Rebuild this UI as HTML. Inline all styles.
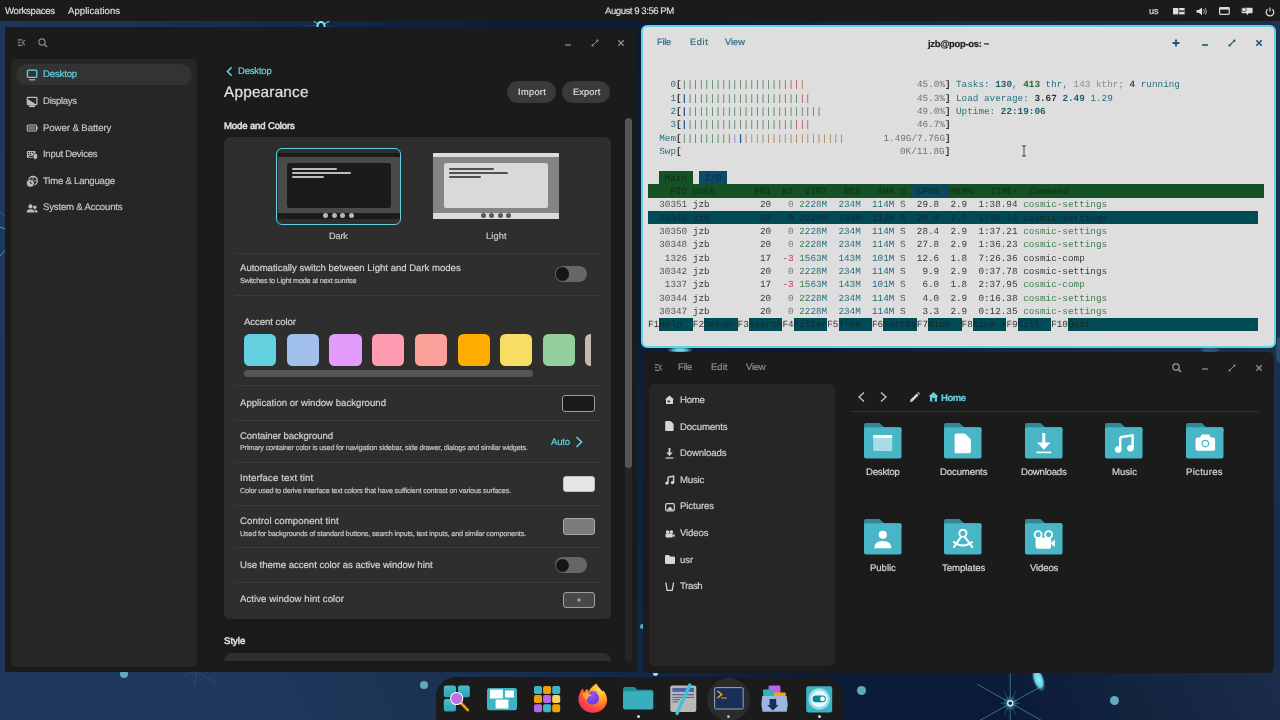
<!DOCTYPE html>
<html><head><meta charset="utf-8"><title>COSMIC desktop</title>
<style>
html,body{margin:0;padding:0;width:1280px;height:720px;overflow:hidden;background:#1b2d4c;}
body{position:relative;font-family:"Liberation Sans",sans-serif;}
svg{overflow:visible}
.t{position:absolute;white-space:pre;line-height:1;text-rendering:geometricPrecision;will-change:transform;transform-origin:0 0}
.s{font-family:"Liberation Sans",sans-serif;-webkit-text-stroke:0.2px currentColor}
.m{font-family:"Liberation Mono",monospace}
</style></head><body>
<div style="position:absolute;left:0;top:0;width:1280px;height:720px;background:linear-gradient(65deg,#20355a 0%,#1f385c 15%,#1b3152 30%,#11284a 40%,#0b1c39 52%,#0b1a36 62%,#142540 72%,#1b2b4a 80%,#1d2e4e 90%,#1f3151 100%);"></div>
<div style="position:absolute;left:119.9px;top:669.6999999999999px;width:8.2px;height:8.2px;background:#62a9c0;border-radius:4.1px;"></div>
<div style="position:absolute;left:420.0px;top:680.8px;width:8.4px;height:8.4px;background:#62a9c0;border-radius:4.2px;"></div>
<div style="position:absolute;left:856.75px;top:686.1px;width:9.0px;height:9.0px;background:#62a9c0;border-radius:4.5px;"></div>
<div style="position:absolute;left:1110.1px;top:696.3px;width:9.0px;height:9.0px;background:#62a9c0;border-radius:4.5px;"></div>
<div style="position:absolute;left:653.1999999999999px;top:670.6999999999999px;width:5.2px;height:5.2px;background:#86e6f8;border-radius:2.6px;"></div>
<div style="position:absolute;left:639.7px;top:623.6px;width:5.0px;height:5.0px;background:#5aa8c0;border-radius:2.5px;"></div>
<svg style="position:absolute;left:960px;top:660px;" width="100" height="60" viewBox="0 0 100 60">
<defs><radialGradient id="sg" cx="0.5" cy="0.5" r="0.5"><stop offset="0" stop-color="#9ff4ff" stop-opacity="0.9"/><stop offset="0.4" stop-color="#5fc8e8" stop-opacity="0.45"/><stop offset="1" stop-color="#3a90c0" stop-opacity="0"/></radialGradient>
<radialGradient id="cg" cx="0.5" cy="0.5" r="0.5"><stop offset="0" stop-color="#8af2ff" stop-opacity="1"/><stop offset="0.6" stop-color="#70e0f5" stop-opacity="0.9"/><stop offset="1" stop-color="#2a7aa0" stop-opacity="0"/></radialGradient></defs>
<g stroke="#4aa6c8" stroke-width="0.9" opacity="0.7">
<line x1="50.2" y1="10" x2="50.2" y2="62"/><line x1="17" y1="24" x2="86" y2="63"/><line x1="17" y1="62" x2="82" y2="26"/>
</g>
<g stroke="#4aa6c8" stroke-width="0.8" opacity="0.45">
<line x1="40" y1="43.2" x2="60" y2="43.2"/><line x1="44" y1="31" x2="56" y2="55"/><line x1="56" y1="31" x2="44" y2="55"/>
</g>
<circle cx="50.2" cy="43.2" r="8" fill="url(#sg)"/>
<circle cx="50.2" cy="43.2" r="2.5" fill="#1b1b1b" stroke="#b8f6ff" stroke-width="1.4"/>
<ellipse cx="78.5" cy="19.5" rx="6" ry="13" transform="rotate(-18 78.5 19.5)" fill="url(#cg)"/>
</svg>
<svg style="position:absolute;left:170px;top:668px;" width="60" height="24" viewBox="0 0 60 24"><g stroke="#4a9cc0" stroke-width="0.8" fill="none" opacity="0.6"><path d="M26.5 4 L24.4 17" opacity="0.55"/><path d="M28 4 L46 15" opacity="0.45"/><path d="M25 4 L11 7" opacity="0.35"/><path d="M26 4 L20 12" opacity="0.3"/><path d="M27.5 4 L31 12" opacity="0.3"/></g></svg>
<svg style="position:absolute;left:0px;top:205px;" width="6" height="55" viewBox="0 0 6 55"><g stroke="#4aa6c6" fill="none"><path d="M0 7 L5 11.5" stroke-width="0.8" opacity="0.5"/><path d="M0 22 L5 24" stroke-width="1" opacity="0.85"/><path d="M0 51 L5 45" stroke-width="1" opacity="0.8"/></g></svg>
<svg style="position:absolute;left:660px;top:346px;" width="40" height="8" viewBox="0 0 40 8"><defs><radialGradient id="g1" cx="0.5" cy="0.5" r="0.5"><stop offset="0" stop-color="#8af0ff"/><stop offset="0.5" stop-color="#60d0ea" stop-opacity="0.8"/><stop offset="1" stop-color="#2a80b0" stop-opacity="0"/></radialGradient></defs><ellipse cx="20" cy="4" rx="14" ry="3.5" fill="url(#g1)"/></svg>
<svg style="position:absolute;left:1190px;top:346px;" width="40" height="8" viewBox="0 0 40 8"><ellipse cx="20" cy="4" rx="9" ry="2" fill="#4ab8d0" opacity="0.3"/></svg>
<svg style="position:absolute;left:1274px;top:335px;" width="6" height="30" viewBox="0 0 6 30"><ellipse cx="5" cy="15" rx="3" ry="13" fill="#3a90a8" opacity="0.35"/></svg>
<svg style="position:absolute;left:296px;top:18px;" width="50" height="12" viewBox="0 0 50 12"><g stroke="#6ad8ee" stroke-width="1.3" opacity="0.75"><path d="M25 7.5 L17.5 3.2"/><path d="M25 7.5 L33.5 3.2"/></g><path d="M2 6.8 L25 7.5 L40 8.2 L25 8.6 Z" fill="#4fb8d8" opacity="0.35"/><circle cx="25" cy="7.6" r="3.6" fill="none" stroke="#80eefc" stroke-width="1.8"/><circle cx="25" cy="8" r="2.2" fill="#1b1b1b"/></svg>
<div style="position:absolute;left:0px;top:0px;width:1280px;height:21px;background:#1b1b1b;border-radius:0px;"></div>
<div class="t s" style="left:5.00px;top:7px;font-size:9.6px;color:#dcdcdc;letter-spacing:-0.286px;">Workspaces</div>
<div class="t s" style="left:68.10px;top:7px;font-size:9.6px;color:#dcdcdc;letter-spacing:0.035px;">Applications</div>
<div class="t s" style="left:605.20px;top:7px;font-size:9.6px;color:#dcdcdc;letter-spacing:-0.467px;">August 9 3:56 PM</div>
<div class="t s" style="left:1149.30px;top:7px;font-size:9.12px;color:#dcdcdc;letter-spacing:-0.112px;">us</div>
<div style="position:absolute;left:5px;top:27px;width:632px;height:644.5px;background:#1b1b1b;border-radius:0px;"></div>
<div style="position:absolute;left:11px;top:59px;width:186px;height:608px;background:#262626;border-radius:6px;"></div>
<div style="position:absolute;left:16px;top:64px;width:176px;height:21.3px;background:#333333;border-radius:11px;"></div>
<div class="t s" style="left:43.00px;top:70px;font-size:9.6px;color:#63d0df;letter-spacing:-0.172px;">Desktop</div>
<div class="t s" style="left:43.00px;top:97px;font-size:9.6px;color:#c4c4c4;letter-spacing:-0.300px;">Displays</div>
<div class="t s" style="left:43.00px;top:124px;font-size:9.6px;color:#c4c4c4;letter-spacing:-0.069px;">Power &amp; Battery</div>
<div class="t s" style="left:43.00px;top:150px;font-size:9.6px;color:#c4c4c4;letter-spacing:-0.300px;">Input Devices</div>
<div class="t s" style="left:43.00px;top:177px;font-size:9.6px;color:#c4c4c4;letter-spacing:-0.233px;">Time &amp; Language</div>
<div class="t s" style="left:43.00px;top:203px;font-size:9.6px;color:#c4c4c4;letter-spacing:-0.192px;">System &amp; Accounts</div>
<svg style="position:absolute;left:26px;top:68px;" width="12" height="13" viewBox="0 0 12 13"><rect x="1.4" y="2.2" width="9.4" height="7.2" rx="1" fill="none" stroke="#63d0df" stroke-width="1.3"/><rect x="3" y="11.2" width="6.2" height="1.2" fill="#63d0df"/></svg>
<svg style="position:absolute;left:26px;top:95.5px;" width="12" height="12" viewBox="0 0 12 12"><rect x="1.3" y="1.3" width="9.6" height="7.4" rx="0.8" fill="none" stroke="#bdbdbd" stroke-width="1.2"/><path d="M1.5 3 L10.8 8.8 H1.5 Z" fill="#bdbdbd"/><rect x="3.2" y="9.3" width="5.8" height="1.8" fill="#bdbdbd"/></svg>
<svg style="position:absolute;left:26px;top:124px;" width="12" height="8" viewBox="0 0 12 8"><rect x="1.2" y="1" width="9.4" height="6" rx="1.2" fill="none" stroke="#bdbdbd" stroke-width="1.1"/><rect x="2.4" y="2.2" width="7" height="3.6" fill="#7a7a7a"/><rect x="10.8" y="2.8" width="1" height="2.4" fill="#bdbdbd"/></svg>
<svg style="position:absolute;left:26px;top:150px;" width="12" height="10" viewBox="0 0 12 10"><rect x="0.9" y="0.9" width="8.6" height="6.8" rx="0.8" fill="#bdbdbd"/><g fill="#262626"><rect x="2" y="2" width="1.2" height="1.2"/><rect x="4" y="2" width="1.2" height="1.2"/><rect x="6" y="2" width="1.2" height="1.2"/><rect x="2" y="4" width="1.2" height="1.2"/><rect x="4" y="4" width="1.2" height="1.2"/><rect x="3" y="6" width="4" height="1"/></g><rect x="7.4" y="3.2" width="4" height="6.2" rx="2" fill="#bdbdbd" stroke="#262626" stroke-width="0.7"/></svg>
<svg style="position:absolute;left:26px;top:175.5px;" width="12" height="12" viewBox="0 0 12 12"><circle cx="7" cy="4.8" r="4.3" fill="none" stroke="#bdbdbd" stroke-width="1.3"/><path d="M7 0.5 V9 M3 4.8 H11" stroke="#bdbdbd" stroke-width="0.8"/><circle cx="4.4" cy="7.3" r="4" fill="#bdbdbd" stroke="#262626" stroke-width="0.8"/><path d="M4.4 5 V7.4 H6" stroke="#262626" stroke-width="0.8" fill="none"/></svg>
<svg style="position:absolute;left:26px;top:203.5px;" width="12" height="9" viewBox="0 0 12 9"><circle cx="4.5" cy="2.4" r="2.1" fill="#bdbdbd"/><path d="M0.6 8.6 Q0.6 5.2 4.5 5.2 Q8.4 5.2 8.4 8.6 Z" fill="#bdbdbd"/><circle cx="8.8" cy="3.2" r="1.7" fill="#bdbdbd"/><path d="M8.2 5.6 Q11.6 5.6 11.6 8.6 H9.2" fill="#bdbdbd"/></svg>
<div class="t s" style="left:237.70px;top:67px;font-size:9.6px;color:#63d0df;letter-spacing:-0.243px;">Desktop</div>
<svg style="position:absolute;left:225px;top:65.5px;" width="9" height="11" viewBox="0 0 9 11"><path d="M6.6 1.4 L2.4 5.5 L6.6 9.6" fill="none" stroke="#63d0df" stroke-width="1.5"/></svg>
<div class="t s" style="left:223.50px;top:85px;font-size:15.36px;color:#e2e2e2;letter-spacing:0.186px;">Appearance</div>
<div class="t s" style="left:224.00px;top:122px;font-size:9.6px;color:#dedede;letter-spacing:-0.157px;-webkit-text-stroke:0.55px currentColor;">Mode and Colors</div>
<div style="position:absolute;left:506.7px;top:81.1px;width:49.8px;height:21.7px;background:#3a3a3a;border-radius:11px;"></div>
<div style="position:absolute;left:561.7px;top:81.1px;width:48.5px;height:21.7px;background:#3a3a3a;border-radius:11px;"></div>
<div class="t s" style="left:517.60px;top:88px;font-size:9.22px;color:#dedede;letter-spacing:0.343px;">Import</div>
<div class="t s" style="left:572.50px;top:88px;font-size:9.22px;color:#dedede;letter-spacing:0.141px;">Export</div>
<div style="position:absolute;left:224px;top:137px;width:387px;height:481.5px;background:#2e2e2e;border-radius:6px;"></div>
<div style="position:absolute;left:276px;top:148px;width:123px;height:75px;border:1.3px solid #63d0df;border-radius:6px;"></div>
<div style="position:absolute;left:277.5px;top:153px;width:122.5px;height:4px;background:#1b1b1b;border-radius:0px;"></div>
<div style="position:absolute;left:277.5px;top:157px;width:122.5px;height:56px;background:#4a4a4a;border-radius:0px;"></div>
<div style="position:absolute;left:277.5px;top:213px;width:122.5px;height:6px;background:#1b1b1b;border-radius:0px;"></div>
<div style="position:absolute;left:287px;top:162.5px;width:104px;height:45px;background:#1b1b1b;border-radius:2.5px;"></div>
<div style="position:absolute;left:292px;top:168px;width:45px;height:2.2px;background:#bcbcbc;border-radius:1px;"></div>
<div style="position:absolute;left:292px;top:172px;width:59px;height:2.2px;background:#bcbcbc;border-radius:1px;"></div>
<div style="position:absolute;left:292px;top:176px;width:32px;height:2.2px;background:#bcbcbc;border-radius:1px;"></div>
<div style="position:absolute;left:323.0px;top:213.2px;width:5.2px;height:5.2px;background:#b8b8b8;border-radius:3px;"></div>
<div style="position:absolute;left:331.59999999999997px;top:213.2px;width:5.2px;height:5.2px;background:#b8b8b8;border-radius:3px;"></div>
<div style="position:absolute;left:340.29999999999995px;top:213.2px;width:5.2px;height:5.2px;background:#b8b8b8;border-radius:3px;"></div>
<div style="position:absolute;left:348.79999999999995px;top:213.2px;width:5.2px;height:5.2px;background:#b8b8b8;border-radius:3px;"></div>
<div class="t s" style="left:329.30px;top:232px;font-size:9.22px;color:#c8c8c8;letter-spacing:-0.192px;">Dark</div>
<div style="position:absolute;left:433.3px;top:153px;width:125.4px;height:4px;background:#dcdcdc;border-radius:0px;"></div>
<div style="position:absolute;left:433.3px;top:157px;width:125.4px;height:56px;background:#848484;border-radius:0px;"></div>
<div style="position:absolute;left:433.3px;top:213px;width:125.4px;height:6px;background:#dcdcdc;border-radius:0px;"></div>
<div style="position:absolute;left:444px;top:162.5px;width:104px;height:45px;background:#d9d9d9;border-radius:2.5px;"></div>
<div style="position:absolute;left:449.3px;top:168px;width:45px;height:2.2px;background:#505050;border-radius:1px;"></div>
<div style="position:absolute;left:449.3px;top:172px;width:59px;height:2.2px;background:#505050;border-radius:1px;"></div>
<div style="position:absolute;left:449.3px;top:176px;width:32px;height:2.2px;background:#505050;border-radius:1px;"></div>
<div style="position:absolute;left:480.7px;top:213.2px;width:5.2px;height:5.2px;background:#5a5a5a;border-radius:3px;"></div>
<div style="position:absolute;left:489.0px;top:213.2px;width:5.2px;height:5.2px;background:#5a5a5a;border-radius:3px;"></div>
<div style="position:absolute;left:497.5px;top:213.2px;width:5.2px;height:5.2px;background:#5a5a5a;border-radius:3px;"></div>
<div style="position:absolute;left:506.0px;top:213.2px;width:5.2px;height:5.2px;background:#5a5a5a;border-radius:3px;"></div>
<div class="t s" style="left:485.60px;top:232px;font-size:9.22px;color:#c8c8c8;letter-spacing:0.120px;">Light</div>
<div style="position:absolute;left:235px;top:252.8px;width:365px;height:1px;background:#3a3a3a;border-radius:0px;"></div>
<div style="position:absolute;left:235px;top:295.0px;width:365px;height:1px;background:#3a3a3a;border-radius:0px;"></div>
<div style="position:absolute;left:235px;top:385.0px;width:365px;height:1px;background:#3a3a3a;border-radius:0px;"></div>
<div style="position:absolute;left:235px;top:419.8px;width:365px;height:1px;background:#3a3a3a;border-radius:0px;"></div>
<div style="position:absolute;left:235px;top:462.3px;width:365px;height:1px;background:#3a3a3a;border-radius:0px;"></div>
<div style="position:absolute;left:235px;top:505.1px;width:365px;height:1px;background:#3a3a3a;border-radius:0px;"></div>
<div style="position:absolute;left:235px;top:546.9px;width:365px;height:1px;background:#3a3a3a;border-radius:0px;"></div>
<div style="position:absolute;left:235px;top:581.7px;width:365px;height:1px;background:#3a3a3a;border-radius:0px;"></div>
<div class="t s" style="left:240.00px;top:264px;font-size:9.6px;color:#d2d2d2;letter-spacing:-0.023px;">Automatically switch between Light and Dark modes</div>
<div class="t s" style="left:240.00px;top:277px;font-size:7.3px;color:#c4c4c4;letter-spacing:-0.229px;">Switches to Light mode at next sunrise</div>
<div style="position:absolute;left:554.8px;top:265.9px;width:32.1px;height:16.2px;background:#666666;border-radius:8.1px;"></div>
<div style="position:absolute;left:556.2px;top:267.4px;width:13.2px;height:13.2px;background:#161616;border-radius:6.6px;"></div>
<div class="t s" style="left:243.90px;top:318px;font-size:9.6px;color:#d2d2d2;letter-spacing:-0.066px;">Accent color</div>
<div style="position:absolute;left:243.9px;top:333.9px;width:32.2px;height:32.2px;background:#63d0df;border-radius:5.5px;"></div>
<div style="position:absolute;left:286.62px;top:333.9px;width:32.2px;height:32.2px;background:#a1c1ec;border-radius:5.5px;"></div>
<div style="position:absolute;left:329.34000000000003px;top:333.9px;width:32.2px;height:32.2px;background:#e49cfc;border-radius:5.5px;"></div>
<div style="position:absolute;left:372.06px;top:333.9px;width:32.2px;height:32.2px;background:#ff9cb1;border-radius:5.5px;"></div>
<div style="position:absolute;left:414.78px;top:333.9px;width:32.2px;height:32.2px;background:#fca19a;border-radius:5.5px;"></div>
<div style="position:absolute;left:457.5px;top:333.9px;width:32.2px;height:32.2px;background:#ffad00;border-radius:5.5px;"></div>
<div style="position:absolute;left:500.22px;top:333.9px;width:32.2px;height:32.2px;background:#f7de62;border-radius:5.5px;"></div>
<div style="position:absolute;left:542.9399999999999px;top:333.9px;width:32.2px;height:32.2px;background:#92cf9c;border-radius:5.5px;"></div>
<div style="position:absolute;left:585.2px;top:333.9px;width:5.9px;height:32.2px;overflow:hidden;"><div style="width:32px;height:32.2px;background:#c9b8ae;border-radius:5.5px;"></div></div>
<div style="position:absolute;left:244px;top:370px;width:289px;height:6.6px;background:#555555;border-radius:3.3px;"></div>
<div class="t s" style="left:240.00px;top:399px;font-size:9.6px;color:#d2d2d2;letter-spacing:0.013px;">Application or window background</div>
<div style="position:absolute;left:562.2px;top:395px;width:30.8px;height:14.7px;border:1px solid #9c9c9c;border-radius:3px;background:#1b1b1b;"></div>
<div class="t s" style="left:240.00px;top:432px;font-size:9.6px;color:#d2d2d2;letter-spacing:-0.070px;">Container background</div>
<div class="t s" style="left:240.00px;top:444px;font-size:7.3px;color:#c4c4c4;letter-spacing:-0.191px;">Primary container color is used for navigation sidebar, side drawer, dialogs and similar widgets.</div>
<div class="t s" style="left:551.00px;top:438px;font-size:9.6px;color:#63d0df;letter-spacing:-0.188px;">Auto</div>
<svg style="position:absolute;left:574px;top:435px;" width="10" height="14" viewBox="0 0 10 14"><path d="M2.5 2 L7.5 7 L2.5 12" fill="none" stroke="#63d0df" stroke-width="1.6"/></svg>
<div class="t s" style="left:240.00px;top:474px;font-size:9.6px;color:#d2d2d2;letter-spacing:0.124px;">Interface text tint</div>
<div class="t s" style="left:240.00px;top:487px;font-size:7.3px;color:#c4c4c4;letter-spacing:-0.190px;">Color used to derive interface text colors that have sufficient contrast on various surfaces.</div>
<div style="position:absolute;left:562.7px;top:476px;width:30.2px;height:14.2px;border:1px solid #bdbdbd;border-radius:3px;background:#e6e6e6;"></div>
<div class="t s" style="left:240.00px;top:517px;font-size:9.6px;color:#d2d2d2;letter-spacing:0.101px;">Control component tint</div>
<div class="t s" style="left:240.00px;top:530px;font-size:7.3px;color:#c4c4c4;letter-spacing:-0.192px;">Used for backgrounds of standard buttons, search inputs, text inputs, and similar components.</div>
<div style="position:absolute;left:562.7px;top:518.2px;width:30.2px;height:14.7px;border:1px solid #a8a8a8;border-radius:3px;background:#7b7b7b;"></div>
<div class="t s" style="left:240.00px;top:561px;font-size:9.6px;color:#d2d2d2;letter-spacing:-0.032px;">Use theme accent color as active window hint</div>
<div style="position:absolute;left:554.6px;top:557.1px;width:32.1px;height:16.2px;background:#666666;border-radius:8.1px;"></div>
<div style="position:absolute;left:556.0px;top:558.6px;width:13.2px;height:13.2px;background:#161616;border-radius:6.6px;"></div>
<div class="t s" style="left:240.00px;top:595px;font-size:9.6px;color:#d2d2d2;letter-spacing:0.063px;">Active window hint color</div>
<div style="position:absolute;left:562.7px;top:591.6px;width:30.2px;height:14.2px;border:1px solid #a0a0a0;border-radius:3px;background:#494949;"></div>
<svg style="position:absolute;left:574.6px;top:595.7px;" width="8" height="8" viewBox="0 0 8 8"><path d="M4 2.2 V5.8 M2.2 4 H5.8" stroke="#bdbdbd" stroke-width="1"/></svg>
<div class="t s" style="left:224.00px;top:637px;font-size:9.6px;color:#dedede;letter-spacing:-0.009px;-webkit-text-stroke:0.55px currentColor;">Style</div>
<div style="position:absolute;left:224px;top:653.2px;width:387px;height:8px;overflow:hidden;"><div style="width:387px;height:40px;background:#2e2e2e;border-radius:8px;"></div></div>
<div style="position:absolute;left:625.2px;top:118.3px;width:6.9px;height:543px;background:#262626;border-radius:3.5px;"></div>
<div style="position:absolute;left:625.2px;top:118.3px;width:6.9px;height:349.5px;background:#555555;border-radius:3.5px;"></div>
<svg style="position:absolute;left:15.899999999999999px;top:37.9px;" width="12" height="10" viewBox="0 0 12 10"><g fill="none" stroke="#888888"><path d="M1.9 1.9 H6.4 M1.9 7.4 H6.4" stroke-width="1.3"/><path d="M1.9 4.5 H4" stroke-width="1.2"/><path d="M8.8 2.2 L6.3 4.6 L8.8 7" stroke-width="1.1"/></g></svg>
<svg style="position:absolute;left:35.6px;top:35.6px;" width="14" height="14" viewBox="0 0 14 14"><circle cx="6" cy="6" r="3.1" fill="none" stroke="#8a8a8a" stroke-width="1.15"/><path d="M8.3 8.3 L11 11" stroke="#8a8a8a" stroke-width="1.5"/></svg>
<svg style="position:absolute;left:563px;top:39.7px;" width="10" height="10" viewBox="0 0 10 10"><path d="M2.1 5 H7.9" stroke="#8e8e8e" stroke-width="1.3"/></svg>
<svg style="position:absolute;left:589.8px;top:37.8px;" width="10" height="10" viewBox="0 0 10 10"><path d="M2.6 7.4 L7.4 2.6" stroke="#8e8e8e" stroke-width="0.96"/><rect x="1.6" y="6.4" width="2" height="2" fill="#8e8e8e"/><rect x="6.4" y="1.6" width="2" height="2" fill="#8e8e8e"/></svg>
<svg style="position:absolute;left:616.2px;top:37.7px;" width="10" height="10" viewBox="0 0 10 10"><path d="M2.3 2.3 L7.7 7.7 M7.7 2.3 L2.3 7.7" stroke="#8e8e8e" stroke-width="1.3"/></svg>
<div style="position:absolute;left:640.5px;top:24.7px;width:631.5px;height:319.1px;border:2.6px solid #5fd3e2;border-radius:6px;background:#dedede;"></div>
<div class="t s" style="left:657.00px;top:38px;font-size:9.22px;color:#2c6a88;letter-spacing:-0.215px;">File</div>
<div class="t s" style="left:690.00px;top:38px;font-size:9.22px;color:#2c6a88;letter-spacing:0.652px;">Edit</div>
<div class="t s" style="left:724.50px;top:38px;font-size:9.22px;color:#2c6a88;letter-spacing:0.043px;">View</div>
<div class="t s" style="left:928.00px;top:39px;font-size:9.41px;font-weight:700;color:#222222;letter-spacing:-0.294px;">jzb@pop-os: ~</div>
<svg style="position:absolute;left:1171px;top:37.6px;" width="10" height="10" viewBox="0 0 10 10"><path d="M5 1.6 V8.4 M1.6 5 H8.4" stroke="#11577a" stroke-width="1.8"/></svg>
<svg style="position:absolute;left:1200.3px;top:39.6px;" width="10" height="10" viewBox="0 0 10 10"><path d="M2.1 5 H7.9" stroke="#11577a" stroke-width="1.6"/></svg>
<svg style="position:absolute;left:1227.2px;top:37.7px;" width="10" height="10" viewBox="0 0 10 10"><path d="M2.6 7.4 L7.4 2.6" stroke="#11577a" stroke-width="1.2000000000000002"/><rect x="1.6" y="6.4" width="2" height="2" fill="#11577a"/><rect x="6.4" y="1.6" width="2" height="2" fill="#11577a"/></svg>
<svg style="position:absolute;left:1253.6px;top:37.7px;" width="10" height="10" viewBox="0 0 10 10"><path d="M2.3 2.3 L7.7 7.7 M7.7 2.3 L2.3 7.7" stroke="#11577a" stroke-width="1.6"/></svg>
<div class="t m" style="left:648.10px;top:80px;font-size:9.333px;color:#333;"><span style="color:#28707e;">    0</span><span style="color:#333333;font-weight:700;">[</span><span style="color:#3d7d4d;">|</span><span style="color:#3d7d4d;">|</span><span style="color:#3d7d4d;">|</span><span style="color:#3d7d4d;">|</span><span style="color:#3d7d4d;">|</span><span style="color:#3d7d4d;">|</span><span style="color:#3d7d4d;">|</span><span style="color:#3d7d4d;">|</span><span style="color:#3d7d4d;">|</span><span style="color:#3d7d4d;">|</span><span style="color:#3d7d4d;">|</span><span style="color:#3d7d4d;">|</span><span style="color:#3d7d4d;">|</span><span style="color:#3d7d4d;">|</span><span style="color:#3d7d4d;">|</span><span style="color:#3d7d4d;">|</span><span style="color:#3d7d4d;">|</span><span style="color:#3d7d4d;">|</span><span style="color:#3d7d4d;">|</span><span style="color:#b8404f;">|</span><span style="color:#b8404f;">|</span><span style="color:#9c7c4c;">|</span><span style="color:#333333;">                    </span><span style="color:#727272;">45.0%</span><span style="color:#333333;font-weight:700;">]</span></div>
<div class="t m" style="left:648.10px;top:94px;font-size:9.333px;color:#333;"><span style="color:#28707e;">    1</span><span style="color:#333333;font-weight:700;">[</span><span style="color:#17508a;font-weight:700;">|</span><span style="color:#3d7d4d;">|</span><span style="color:#3d7d4d;">|</span><span style="color:#3d7d4d;">|</span><span style="color:#3d7d4d;">|</span><span style="color:#3d7d4d;">|</span><span style="color:#3d7d4d;">|</span><span style="color:#3d7d4d;">|</span><span style="color:#3d7d4d;">|</span><span style="color:#3d7d4d;">|</span><span style="color:#3d7d4d;">|</span><span style="color:#3d7d4d;">|</span><span style="color:#3d7d4d;">|</span><span style="color:#3d7d4d;">|</span><span style="color:#3d7d4d;">|</span><span style="color:#3d7d4d;">|</span><span style="color:#3d7d4d;">|</span><span style="color:#3d7d4d;">|</span><span style="color:#3d7d4d;">|</span><span style="color:#3d7d4d;">|</span><span style="color:#3d7d4d;">|</span><span style="color:#b8404f;">|</span><span style="color:#b8404f;">|</span><span style="color:#333333;">                   </span><span style="color:#727272;">45.3%</span><span style="color:#333333;font-weight:700;">]</span></div>
<div class="t m" style="left:648.10px;top:107px;font-size:9.333px;color:#333;"><span style="color:#28707e;">    2</span><span style="color:#333333;font-weight:700;">[</span><span style="color:#17508a;font-weight:700;">|</span><span style="color:#3d7d4d;">|</span><span style="color:#3d7d4d;">|</span><span style="color:#3d7d4d;">|</span><span style="color:#3d7d4d;">|</span><span style="color:#3d7d4d;">|</span><span style="color:#3d7d4d;">|</span><span style="color:#3d7d4d;">|</span><span style="color:#3d7d4d;">|</span><span style="color:#3d7d4d;">|</span><span style="color:#3d7d4d;">|</span><span style="color:#3d7d4d;">|</span><span style="color:#3d7d4d;">|</span><span style="color:#3d7d4d;">|</span><span style="color:#3d7d4d;">|</span><span style="color:#3d7d4d;">|</span><span style="color:#3d7d4d;">|</span><span style="color:#3d7d4d;">|</span><span style="color:#3d7d4d;">|</span><span style="color:#3d7d4d;">|</span><span style="color:#3d7d4d;">|</span><span style="color:#3d7d4d;">|</span><span style="color:#b8404f;">|</span><span style="color:#b8404f;">|</span><span style="color:#b8404f;">|</span><span style="color:#333333;">                 </span><span style="color:#727272;">49.0%</span><span style="color:#333333;font-weight:700;">]</span></div>
<div class="t m" style="left:648.10px;top:120px;font-size:9.333px;color:#333;"><span style="color:#28707e;">    3</span><span style="color:#333333;font-weight:700;">[</span><span style="color:#17508a;font-weight:700;">|</span><span style="color:#3d7d4d;">|</span><span style="color:#3d7d4d;">|</span><span style="color:#3d7d4d;">|</span><span style="color:#3d7d4d;">|</span><span style="color:#3d7d4d;">|</span><span style="color:#3d7d4d;">|</span><span style="color:#3d7d4d;">|</span><span style="color:#3d7d4d;">|</span><span style="color:#3d7d4d;">|</span><span style="color:#3d7d4d;">|</span><span style="color:#3d7d4d;">|</span><span style="color:#3d7d4d;">|</span><span style="color:#3d7d4d;">|</span><span style="color:#3d7d4d;">|</span><span style="color:#3d7d4d;">|</span><span style="color:#3d7d4d;">|</span><span style="color:#3d7d4d;">|</span><span style="color:#3d7d4d;">|</span><span style="color:#3d7d4d;">|</span><span style="color:#b8404f;">|</span><span style="color:#b8404f;">|</span><span style="color:#b8404f;">|</span><span style="color:#333333;">                   </span><span style="color:#727272;">46.7%</span><span style="color:#333333;font-weight:700;">]</span></div>
<div class="t m" style="left:648.10px;top:134px;font-size:9.333px;color:#333;"><span style="color:#28707e;">  Mem</span><span style="color:#333333;font-weight:700;">[</span><span style="color:#3d7d4d;">|</span><span style="color:#3d7d4d;">|</span><span style="color:#3d7d4d;">|</span><span style="color:#3d7d4d;">|</span><span style="color:#3d7d4d;">|</span><span style="color:#3d7d4d;">|</span><span style="color:#3d7d4d;">|</span><span style="color:#3d7d4d;">|</span><span style="color:#3d7d4d;">|</span><span style="color:#a874c4;">|</span><span style="color:#17508a;font-weight:700;">|</span><span style="color:#9c7c4c;">|</span><span style="color:#9c7c4c;">|</span><span style="color:#9c7c4c;">|</span><span style="color:#9c7c4c;">|</span><span style="color:#9c7c4c;">|</span><span style="color:#9c7c4c;">|</span><span style="color:#9c7c4c;">|</span><span style="color:#9c7c4c;">|</span><span style="color:#9c7c4c;">|</span><span style="color:#9c7c4c;">|</span><span style="color:#9c7c4c;">|</span><span style="color:#9c7c4c;">|</span><span style="color:#9c7c4c;">|</span><span style="color:#9c7c4c;">|</span><span style="color:#9c7c4c;">|</span><span style="color:#9c7c4c;">|</span><span style="color:#9c7c4c;">|</span><span style="color:#9c7c4c;">|</span><span style="color:#333333;">       </span><span style="color:#727272;">1.49G/7.76G</span><span style="color:#333333;font-weight:700;">]</span></div>
<div class="t m" style="left:648.10px;top:147px;font-size:9.333px;color:#333;"><span style="color:#28707e;">  Swp</span><span style="color:#333333;font-weight:700;">[</span><span style="color:#333333;">                                       </span><span style="color:#727272;">0K/11.8G</span><span style="color:#333333;font-weight:700;">]</span></div>
<div class="t m" style="left:956.10px;top:80px;font-size:9.333px;color:#333;"><span style="color:#28707e;">Tasks: </span><span style="color:#1d5f6e;font-weight:700;">130</span><span style="color:#28707e;">, </span><span style="color:#2a6a30;font-weight:700;">413</span><span style="color:#28707e;"> thr, </span><span style="color:#8a8a8a;">143</span><span style="color:#8a8a8a;"> kthr; </span><span style="color:#2a6a30;font-weight:700;">4</span><span style="color:#28707e;"> running</span></div>
<div class="t m" style="left:956.10px;top:94px;font-size:9.333px;color:#333;"><span style="color:#28707e;">Load average: </span><span style="color:#333333;font-weight:700;">3.67 </span><span style="color:#1d5f6e;font-weight:700;">2.49 </span><span style="color:#28707e;">1.29</span></div>
<div class="t m" style="left:956.10px;top:107px;font-size:9.333px;color:#333;"><span style="color:#28707e;">Uptime: </span><span style="color:#1d5f6e;font-weight:700;">22:19:06</span></div>
<div style="position:absolute;left:659.3000000000001px;top:170.86999999999998px;width:33.599999999999994px;height:13.33px;background:#155126;border-radius:0px;"></div>
<div style="position:absolute;left:698.5px;top:170.86999999999998px;width:28.0px;height:13.33px;background:#0c4a6a;border-radius:0px;"></div>
<div class="t m" style="left:659.30px;top:174px;font-size:9.333px;color:#333;"><span style="color:#152a19;"> Main </span></div>
<div class="t m" style="left:698.50px;top:174px;font-size:9.333px;color:#333;"><span style="color:#102a38;"> I/O </span></div>
<div style="position:absolute;left:648.1px;top:184.2px;width:616.0px;height:13.33px;background:#155126;border-radius:0px;"></div>
<div style="position:absolute;left:911.3px;top:184.2px;width:39.199999999999996px;height:13.33px;background:#0b4a5a;border-radius:0px;"></div>
<div class="t m" style="left:648.10px;top:187px;font-size:9.333px;color:#333;"><span style="color:#152a19;">    PID USER       PRI  NI  VIRT   RES   SHR S  CPU%</span></div>
<svg style="position:absolute;left:944.9px;top:187.2px;" width="6" height="8" viewBox="0 0 6 8"><path d="M0.8 2.5 H5.2 L3 7 Z" fill="none" stroke="#1e3a40" stroke-width="0.8"/></svg>
<div class="t m" style="left:950.50px;top:187px;font-size:9.333px;color:#333;"><span style="color:#152a19;">MEM%   TIME+  Command</span></div>
<div style="position:absolute;left:648.1px;top:210.85999999999999px;width:610.4px;height:13.33px;background:#004b55;border-radius:0px;"></div>
<div class="t m" style="left:648.10px;top:200px;font-size:9.333px;color:#333;"><span style="color:#555555;">  30351 </span><span style="color:#333333;">jzb       </span><span style="color:#3a3a3a;">  20 </span><span style="color:#7a7a7a;">  0 </span><span style="color:#3d7d4d;">2</span><span style="color:#2a6f7c;">228M  </span><span style="color:#2a7080;">234M  </span><span style="color:#226878;">114M </span><span style="color:#555555;">S  </span><span style="color:#3a3a3a;">29.8  </span><span style="color:#3a3a3a;">2.9  </span><span style="color:#3a3a3a;">1:38.94 </span><span style="color:#3d7d4d;">cosmic-settings</span></div>
<div class="t m" style="left:648.10px;top:214px;font-size:9.333px;color:#333;"><span style="color:#15292b;">  30349 </span><span style="color:#15292b;">jzb       </span><span style="color:#15292b;">  20 </span><span style="color:#15292b;">  0 </span><span style="color:#15292b;">2</span><span style="color:#15292b;">228M  </span><span style="color:#15292b;">234M  </span><span style="color:#15292b;">114M </span><span style="color:#15292b;">S  </span><span style="color:#15292b;">28.4  </span><span style="color:#15292b;">2.9  </span><span style="color:#15292b;">1:36.18 </span><span style="color:#15292b;">cosmic-settings</span></div>
<div class="t m" style="left:648.10px;top:227px;font-size:9.333px;color:#333;"><span style="color:#555555;">  30350 </span><span style="color:#333333;">jzb       </span><span style="color:#3a3a3a;">  20 </span><span style="color:#7a7a7a;">  0 </span><span style="color:#3d7d4d;">2</span><span style="color:#2a6f7c;">228M  </span><span style="color:#2a7080;">234M  </span><span style="color:#226878;">114M </span><span style="color:#555555;">S  </span><span style="color:#3a3a3a;">28.4  </span><span style="color:#3a3a3a;">2.9  </span><span style="color:#3a3a3a;">1:37.21 </span><span style="color:#3d7d4d;">cosmic-settings</span></div>
<div class="t m" style="left:648.10px;top:240px;font-size:9.333px;color:#333;"><span style="color:#555555;">  30348 </span><span style="color:#333333;">jzb       </span><span style="color:#3a3a3a;">  20 </span><span style="color:#7a7a7a;">  0 </span><span style="color:#3d7d4d;">2</span><span style="color:#2a6f7c;">228M  </span><span style="color:#2a7080;">234M  </span><span style="color:#226878;">114M </span><span style="color:#555555;">S  </span><span style="color:#3a3a3a;">27.8  </span><span style="color:#3a3a3a;">2.9  </span><span style="color:#3a3a3a;">1:36.23 </span><span style="color:#3d7d4d;">cosmic-settings</span></div>
<div class="t m" style="left:648.10px;top:254px;font-size:9.333px;color:#333;"><span style="color:#555555;">   1326 </span><span style="color:#333333;">jzb       </span><span style="color:#3a3a3a;">  17 </span><span style="color:#b8404f;"> -3 </span><span style="color:#3d7d4d;">1</span><span style="color:#2a6f7c;">563M  </span><span style="color:#2a7080;">143M  </span><span style="color:#226878;">101M </span><span style="color:#555555;">S  </span><span style="color:#3a3a3a;">12.6  </span><span style="color:#3a3a3a;">1.8  </span><span style="color:#3a3a3a;">7:26.36 </span><span style="color:#3a3a3a;">cosmic-comp</span></div>
<div class="t m" style="left:648.10px;top:267px;font-size:9.333px;color:#333;"><span style="color:#555555;">  30342 </span><span style="color:#333333;">jzb       </span><span style="color:#3a3a3a;">  20 </span><span style="color:#7a7a7a;">  0 </span><span style="color:#3d7d4d;">2</span><span style="color:#2a6f7c;">228M  </span><span style="color:#2a7080;">234M  </span><span style="color:#226878;">114M </span><span style="color:#555555;">S  </span><span style="color:#3a3a3a;"> 9.9  </span><span style="color:#3a3a3a;">2.9  </span><span style="color:#3a3a3a;">0:37.78 </span><span style="color:#3a3a3a;">cosmic-settings</span></div>
<div class="t m" style="left:648.10px;top:280px;font-size:9.333px;color:#333;"><span style="color:#555555;">   1337 </span><span style="color:#333333;">jzb       </span><span style="color:#3a3a3a;">  17 </span><span style="color:#b8404f;"> -3 </span><span style="color:#3d7d4d;">1</span><span style="color:#2a6f7c;">563M  </span><span style="color:#2a7080;">143M  </span><span style="color:#226878;">101M </span><span style="color:#555555;">S  </span><span style="color:#3a3a3a;"> 6.0  </span><span style="color:#3a3a3a;">1.8  </span><span style="color:#3a3a3a;">2:37.95 </span><span style="color:#3d7d4d;">cosmic-comp</span></div>
<div class="t m" style="left:648.10px;top:294px;font-size:9.333px;color:#333;"><span style="color:#555555;">  30344 </span><span style="color:#333333;">jzb       </span><span style="color:#3a3a3a;">  20 </span><span style="color:#7a7a7a;">  0 </span><span style="color:#3d7d4d;">2</span><span style="color:#2a6f7c;">228M  </span><span style="color:#2a7080;">234M  </span><span style="color:#226878;">114M </span><span style="color:#555555;">S  </span><span style="color:#3a3a3a;"> 4.0  </span><span style="color:#3a3a3a;">2.9  </span><span style="color:#3a3a3a;">0:16.38 </span><span style="color:#3d7d4d;">cosmic-settings</span></div>
<div class="t m" style="left:648.10px;top:307px;font-size:9.333px;color:#333;"><span style="color:#555555;">  30347 </span><span style="color:#333333;">jzb       </span><span style="color:#3a3a3a;">  20 </span><span style="color:#7a7a7a;">  0 </span><span style="color:#3d7d4d;">2</span><span style="color:#2a6f7c;">228M  </span><span style="color:#2a7080;">234M  </span><span style="color:#226878;">114M </span><span style="color:#555555;">S  </span><span style="color:#3a3a3a;"> 3.3  </span><span style="color:#3a3a3a;">2.9  </span><span style="color:#3a3a3a;">0:12.35 </span><span style="color:#3d7d4d;">cosmic-settings</span></div>
<div style="position:absolute;left:659.3000000000001px;top:317.5px;width:33.599999999999994px;height:13.33px;background:#004b55;border-radius:0px;"></div>
<div style="position:absolute;left:704.1px;top:317.5px;width:33.599999999999994px;height:13.33px;background:#004b55;border-radius:0px;"></div>
<div style="position:absolute;left:748.9px;top:317.5px;width:33.599999999999994px;height:13.33px;background:#004b55;border-radius:0px;"></div>
<div style="position:absolute;left:793.7px;top:317.5px;width:33.599999999999994px;height:13.33px;background:#004b55;border-radius:0px;"></div>
<div style="position:absolute;left:838.5px;top:317.5px;width:33.599999999999994px;height:13.33px;background:#004b55;border-radius:0px;"></div>
<div style="position:absolute;left:883.3px;top:317.5px;width:33.599999999999994px;height:13.33px;background:#004b55;border-radius:0px;"></div>
<div style="position:absolute;left:928.1px;top:317.5px;width:33.599999999999994px;height:13.33px;background:#004b55;border-radius:0px;"></div>
<div style="position:absolute;left:972.9px;top:317.5px;width:33.599999999999994px;height:13.33px;background:#004b55;border-radius:0px;"></div>
<div style="position:absolute;left:1017.7px;top:317.5px;width:33.599999999999994px;height:13.33px;background:#004b55;border-radius:0px;"></div>
<div style="position:absolute;left:1068.1px;top:317.5px;width:190.39999999999998px;height:13.33px;background:#004b55;border-radius:0px;"></div>
<div class="t m" style="left:648.10px;top:320px;font-size:9.333px;color:#333;"><span style="color:#333333;">F1</span><span style="color:#15292b;">Help  </span><span style="color:#333333;">F2</span><span style="color:#15292b;">Setup </span><span style="color:#333333;">F3</span><span style="color:#15292b;">Search</span><span style="color:#333333;">F4</span><span style="color:#15292b;">Filter</span><span style="color:#333333;">F5</span><span style="color:#15292b;">Tree  </span><span style="color:#333333;">F6</span><span style="color:#15292b;">SortBy</span><span style="color:#333333;">F7</span><span style="color:#15292b;">Nice -</span><span style="color:#333333;">F8</span><span style="color:#15292b;">Nice +</span><span style="color:#333333;">F9</span><span style="color:#15292b;">Kill  </span><span style="color:#333333;">F10</span><span style="color:#15292b;">Quit</span></div>
<svg style="position:absolute;left:1021px;top:145px;" width="6" height="12" viewBox="0 0 6 12"><path d="M1 1 H5 M3 1 V11 M1 11 H5" stroke="#333" stroke-width="0.9" fill="none"/></svg>
<div style="position:absolute;left:643px;top:352px;width:631px;height:320.5px;background:#1b1b1b;border-radius:6px;"></div>
<svg style="position:absolute;left:653.2px;top:363px;" width="12" height="10" viewBox="0 0 12 10"><g fill="none" stroke="#888888"><path d="M1.9 1.9 H6.4 M1.9 7.4 H6.4" stroke-width="1.3"/><path d="M1.9 4.5 H4" stroke-width="1.2"/><path d="M8.8 2.2 L6.3 4.6 L8.8 7" stroke-width="1.1"/></g></svg>
<div class="t s" style="left:677.70px;top:362px;font-size:9.41px;color:#8e8e8e;letter-spacing:-0.293px;">File</div>
<div class="t s" style="left:711.00px;top:362px;font-size:9.41px;color:#8e8e8e;letter-spacing:0.070px;">Edit</div>
<div class="t s" style="left:745.80px;top:362px;font-size:9.41px;color:#8e8e8e;letter-spacing:-0.205px;">View</div>
<svg style="position:absolute;left:1169.8px;top:361.4px;" width="14" height="14" viewBox="0 0 14 14"><circle cx="6" cy="6" r="3.1" fill="none" stroke="#a0a0a0" stroke-width="1.15"/><path d="M8.3 8.3 L11 11" stroke="#a0a0a0" stroke-width="1.5"/></svg>
<svg style="position:absolute;left:1200.3px;top:364.3px;" width="10" height="10" viewBox="0 0 10 10"><path d="M2.1 5 H7.9" stroke="#8e8e8e" stroke-width="1.3"/></svg>
<svg style="position:absolute;left:1227px;top:363.1px;" width="10" height="10" viewBox="0 0 10 10"><path d="M2.6 7.4 L7.4 2.6" stroke="#8e8e8e" stroke-width="0.96"/><rect x="1.6" y="6.4" width="2" height="2" fill="#8e8e8e"/><rect x="6.4" y="1.6" width="2" height="2" fill="#8e8e8e"/></svg>
<svg style="position:absolute;left:1253.7px;top:363.1px;" width="10" height="10" viewBox="0 0 10 10"><path d="M2.3 2.3 L7.7 7.7 M7.7 2.3 L2.3 7.7" stroke="#8e8e8e" stroke-width="1.3"/></svg>
<div style="position:absolute;left:648.5px;top:384px;width:186px;height:282.3px;background:#262626;border-radius:6px;"></div>
<div class="t s" style="left:680.20px;top:396px;font-size:9.6px;color:#d0d0d0;letter-spacing:-0.273px;">Home</div>
<div class="t s" style="left:680.20px;top:423px;font-size:9.6px;color:#d0d0d0;letter-spacing:-0.115px;">Documents</div>
<div class="t s" style="left:680.20px;top:449px;font-size:9.6px;color:#d0d0d0;letter-spacing:-0.108px;">Downloads</div>
<div class="t s" style="left:680.20px;top:476px;font-size:9.6px;color:#d0d0d0;letter-spacing:-0.212px;">Music</div>
<div class="t s" style="left:680.20px;top:502px;font-size:9.6px;color:#d0d0d0;letter-spacing:-0.082px;">Pictures</div>
<div class="t s" style="left:680.20px;top:529px;font-size:9.6px;color:#d0d0d0;letter-spacing:-0.145px;">Videos</div>
<div class="t s" style="left:680.20px;top:556px;font-size:9.6px;color:#d0d0d0;letter-spacing:-0.009px;">usr</div>
<div class="t s" style="left:680.20px;top:582px;font-size:9.6px;color:#d0d0d0;letter-spacing:-0.374px;">Trash</div>
<svg style="position:absolute;left:665.2px;top:395.3px;" width="10" height="11" viewBox="0 0 10 11"><path d="M4.5 0.5 L9 4.5 H8 V9 H1 V4.5 H0 Z" fill="#d6d6d6"/><rect x="2.6" y="5.6" width="2.4" height="1.6" fill="#262626"/></svg>
<svg style="position:absolute;left:665.2px;top:421.3px;" width="10" height="11" viewBox="0 0 10 11"><path d="M1.2 0 H5.6 L8.6 3 V9 Q8.6 10 7.6 10 H1.2 Q0.2 10 0.2 9 V1 Q0.2 0 1.2 0 Z" fill="#d6d6d6"/></svg>
<svg style="position:absolute;left:665.2px;top:448px;" width="10" height="11" viewBox="0 0 10 11"><path d="M3.6 0 H5.4 V4.6 H7.8 L4.5 8 L1.2 4.6 H3.6 Z" fill="#d6d6d6"/><rect x="0.6" y="9.4" width="7.8" height="1.2" fill="#d6d6d6"/></svg>
<svg style="position:absolute;left:665.2px;top:475px;" width="10" height="11" viewBox="0 0 10 11"><path d="M3 2.2 L8.6 1 V7.6" fill="none" stroke="#d6d6d6" stroke-width="1.4"/><path d="M3 2.2 V8" stroke="#d6d6d6" stroke-width="1.4"/><circle cx="1.9" cy="8.1" r="1.7" fill="#d6d6d6"/><circle cx="7.5" cy="7.6" r="1.7" fill="#d6d6d6"/></svg>
<svg style="position:absolute;left:665.2px;top:502.6px;" width="10" height="11" viewBox="0 0 10 11"><rect x="0.7" y="0.6" width="8.6" height="7.2" rx="1.2" fill="none" stroke="#d6d6d6" stroke-width="1.2"/><path d="M2.2 6.4 L5 3.6 L7.8 6.4 Z" fill="#d6d6d6"/><rect x="2" y="6.2" width="6" height="0.8" fill="#d6d6d6"/></svg>
<svg style="position:absolute;left:665.2px;top:529.7px;" width="10" height="11" viewBox="0 0 10 11"><circle cx="2.6" cy="2" r="1.8" fill="#d6d6d6"/><circle cx="6.4" cy="2" r="1.8" fill="#d6d6d6"/><rect x="0.6" y="3.4" width="7.2" height="4.2" rx="0.8" fill="#d6d6d6"/><path d="M7.6 5.5 L9.6 3.8 V7.4 Z" fill="#d6d6d6"/></svg>
<svg style="position:absolute;left:665.2px;top:555px;" width="10" height="11" viewBox="0 0 10 11"><path d="M0 1.2 Q0 0 1.2 0 H4 L5 1.4 H8.8 Q10 1.4 10 2.6 V7.8 Q10 9 8.8 9 H1.2 Q0 9 0 7.8 Z" fill="#d6d6d6"/></svg>
<svg style="position:absolute;left:665.2px;top:582.2px;" width="10" height="11" viewBox="0 0 10 11"><path d="M0.8 0.5 L2.2 8.4 H7.2 L8.6 0.5" fill="none" stroke="#d6d6d6" stroke-width="1.3"/></svg>
<svg style="position:absolute;left:856px;top:391px;" width="12" height="12" viewBox="0 0 12 12"><path d="M8 1.5 L3 6 L8 10.5" fill="none" stroke="#c8c8c8" stroke-width="1.3"/></svg>
<svg style="position:absolute;left:877px;top:391px;" width="12" height="12" viewBox="0 0 12 12"><path d="M4 1.5 L9 6 L4 10.5" fill="none" stroke="#c8c8c8" stroke-width="1.3"/></svg>
<svg style="position:absolute;left:908px;top:391px;" width="13" height="13" viewBox="0 0 13 13"><path d="M2 11 L2.6 8.6 L8.8 2.4 L10.6 4.2 L4.4 10.4 Z" fill="#d8d8d8"/><path d="M9.4 1.8 L10.2 1 L12 2.8 L11.2 3.6 Z" fill="#d8d8d8"/></svg>
<svg style="position:absolute;left:928px;top:391px;" width="11" height="11" viewBox="0 0 11 11"><path d="M5.5 1 L10.5 5.5 H9 V10.5 H2 V5.5 H0.5 Z" fill="#63d0df"/><rect x="4.2" y="7" width="2.6" height="3.5" fill="#1b1b1b"/></svg>
<div class="t s" style="left:941.40px;top:394px;font-size:9.6px;font-weight:700;color:#63d0df;letter-spacing:-0.489px;">Home</div>
<div style="position:absolute;left:850.8px;top:410.75px;width:408px;height:1px;background:#333333;border-radius:0px;"></div>
<svg style="position:absolute;left:863.9px;top:423px" width="38" height="36" viewBox="0 0 38 36"><path d="M0 2 Q0 0 2 0 H15.5 L20 4 H36 Q37.5 4 37.5 5.5 V9 H0 Z" fill="#2e8a99"/><rect x="0" y="4.2" width="37.5" height="31.3" rx="2" fill="#48b6c6"/><rect x="9.2" y="11.9" width="19" height="16.2" rx="1" fill="#a8dde5"/><rect x="9.2" y="11.9" width="19" height="3" rx="1" fill="#fff"/></svg>
<div class="t s" style="left:865.80px;top:468px;font-size:9.6px;color:#d8d8d8;letter-spacing:-0.215px;">Desktop</div>
<svg style="position:absolute;left:944.4px;top:423px" width="38" height="36" viewBox="0 0 38 36"><path d="M0 2 Q0 0 2 0 H15.5 L20 4 H36 Q37.5 4 37.5 5.5 V9 H0 Z" fill="#2e8a99"/><rect x="0" y="4.2" width="37.5" height="31.3" rx="2" fill="#48b6c6"/><path d="M12 10.5 H21 L26.9 16.4 V28.4 Q26.9 30.2 25.1 30.2 H12.4 Q10.6 30.2 10.6 28.4 V12.3 Q10.6 10.5 12.4 10.5 Z" fill="#fff"/></svg>
<div class="t s" style="left:939.50px;top:468px;font-size:9.6px;color:#d8d8d8;letter-spacing:-0.137px;">Documents</div>
<svg style="position:absolute;left:1024.9px;top:423px" width="38" height="36" viewBox="0 0 38 36"><path d="M0 2 Q0 0 2 0 H15.5 L20 4 H36 Q37.5 4 37.5 5.5 V9 H0 Z" fill="#2e8a99"/><rect x="0" y="4.2" width="37.5" height="31.3" rx="2" fill="#48b6c6"/><path d="M17.3 10 H20.3 V19.5 H25.5 L18.8 26.8 L12.1 19.5 H17.3 Z" fill="#fff"/><rect x="11.3" y="28.6" width="15" height="1.6" fill="#fff"/></svg>
<div class="t s" style="left:1020.90px;top:468px;font-size:9.6px;color:#d8d8d8;letter-spacing:-0.219px;">Downloads</div>
<svg style="position:absolute;left:1105.4px;top:423px" width="38" height="36" viewBox="0 0 38 36"><path d="M0 2 Q0 0 2 0 H15.5 L20 4 H36 Q37.5 4 37.5 5.5 V9 H0 Z" fill="#2e8a99"/><rect x="0" y="4.2" width="37.5" height="31.3" rx="2" fill="#48b6c6"/><path d="M15.2 14.2 L27.6 12.4 V25.5" fill="none" stroke="#fff" stroke-width="2.4"/><path d="M15.2 14.2 V27" fill="none" stroke="#fff" stroke-width="2.4"/><circle cx="13.2" cy="26.6" r="3.3" fill="#fff"/><circle cx="25.4" cy="25.3" r="3.3" fill="#fff"/></svg>
<div class="t s" style="left:1111.65px;top:468px;font-size:9.6px;color:#d8d8d8;letter-spacing:-0.013px;">Music</div>
<svg style="position:absolute;left:1185.9px;top:423px" width="38" height="36" viewBox="0 0 38 36"><path d="M0 2 Q0 0 2 0 H15.5 L20 4 H36 Q37.5 4 37.5 5.5 V9 H0 Z" fill="#2e8a99"/><rect x="0" y="4.2" width="37.5" height="31.3" rx="2" fill="#48b6c6"/><path d="M9.6 16.4 Q9.6 14.6 11.4 14.6 H14 L15.8 11.6 H23 L24.8 14.6 H27.3 Q29.1 14.6 29.1 16.4 V25.9 Q29.1 27.7 27.3 27.7 H11.4 Q9.6 27.7 9.6 25.9 Z" fill="#fff"/><circle cx="19.35" cy="20.6" r="3.8" fill="#48b6c6"/><circle cx="19.35" cy="20.6" r="2.6" fill="#fff"/></svg>
<div class="t s" style="left:1186.25px;top:468px;font-size:9.6px;color:#d8d8d8;letter-spacing:0.268px;">Pictures</div>
<svg style="position:absolute;left:863.9px;top:518.9px" width="38" height="36" viewBox="0 0 38 36"><path d="M0 2 Q0 0 2 0 H15.5 L20 4 H36 Q37.5 4 37.5 5.5 V9 H0 Z" fill="#2e8a99"/><rect x="0" y="4.2" width="37.5" height="31.3" rx="2" fill="#48b6c6"/><circle cx="18.85" cy="15.85" r="4.1" fill="#fff"/><path d="M10.3 29.3 Q10.3 22.1 18.8 22.1 Q27.3 22.1 27.3 29.3 Z" fill="#fff"/></svg>
<div class="t s" style="left:869.75px;top:564px;font-size:9.6px;color:#d8d8d8;letter-spacing:-0.057px;">Public</div>
<svg style="position:absolute;left:944.4px;top:518.9px" width="38" height="36" viewBox="0 0 38 36"><path d="M0 2 Q0 0 2 0 H15.5 L20 4 H36 Q37.5 4 37.5 5.5 V9 H0 Z" fill="#2e8a99"/><rect x="0" y="4.2" width="37.5" height="31.3" rx="2" fill="#48b6c6"/><circle cx="18.9" cy="14.3" r="3.6" fill="none" stroke="#fff" stroke-width="1.9"/><path d="M17.2 17.6 L9.5 28.6 M20.6 17.6 L28.7 28.6" stroke="#fff" stroke-width="1.9" fill="none"/><path d="M9.2 22.4 Q18.9 30.5 28.6 22.4" stroke="#fff" stroke-width="1.9" fill="none"/></svg>
<div class="t s" style="left:941.50px;top:564px;font-size:9.6px;color:#d8d8d8;letter-spacing:-0.048px;">Templates</div>
<svg style="position:absolute;left:1024.9px;top:518.9px" width="38" height="36" viewBox="0 0 38 36"><path d="M0 2 Q0 0 2 0 H15.5 L20 4 H36 Q37.5 4 37.5 5.5 V9 H0 Z" fill="#2e8a99"/><rect x="0" y="4.2" width="37.5" height="31.3" rx="2" fill="#48b6c6"/><circle cx="13.1" cy="15.6" r="3.5" fill="none" stroke="#fff" stroke-width="1.9"/><circle cx="23.6" cy="15.6" r="3.5" fill="none" stroke="#fff" stroke-width="1.9"/><rect x="10.6" y="18.6" width="15.5" height="11.2" rx="2" fill="#fff"/><path d="M25.5 24.2 L29.8 20.4 V28 Z" fill="#fff"/></svg>
<div class="t s" style="left:1029.55px;top:564px;font-size:9.6px;color:#d8d8d8;letter-spacing:-0.162px;">Videos</div>
<div style="position:absolute;left:435.7px;top:677.2px;width:407.8px;height:60px;background:#1b1b1b;border-radius:20px;"></div>
<div style="position:absolute;left:707px;top:677.5px;width:43px;height:43px;background:#2b2b2b;border-radius:21.5px;"></div>
<svg style="position:absolute;left:443px;top:685px;" width="28" height="28" viewBox="0 0 28 28">
<defs><linearGradient id="tq" x1="0" y1="0" x2="0" y2="1"><stop offset="0" stop-color="#47bccb"/><stop offset="1" stop-color="#2fa3b3"/></linearGradient></defs>
<rect x="0.8" y="0.6" width="12.2" height="11.6" rx="2" fill="url(#tq)"/><rect x="15" y="0.6" width="11.8" height="11.6" rx="2" fill="url(#tq)"/>
<rect x="0.8" y="14" width="12.2" height="12.6" rx="2" fill="url(#tq)"/>
<path d="M18.5 18.5 L24.8 25.2" stroke="#f2a000" stroke-width="2.6" stroke-linecap="round"/>
<circle cx="13.7" cy="13.5" r="6.6" fill="#fff"/><circle cx="13.7" cy="13.5" r="5.6" fill="#c06ee8"/></svg>
<svg style="position:absolute;left:487px;top:687.5px;" width="30" height="23" viewBox="0 0 30 23">
<rect x="0" y="0" width="30" height="22.2" rx="2.2" fill="#3fb3c3"/>
<rect x="2.9" y="1.6" width="13" height="8.9" fill="#fff"/><rect x="18.1" y="2.5" width="8.9" height="7" fill="#fff"/>
<rect x="8.6" y="11.6" width="12.8" height="8.9" fill="#fff"/></svg>
<svg style="position:absolute;left:534.3px;top:685.7px;" width="27" height="27" viewBox="0 0 27 27"><rect x="0.0" y="0.0" width="8" height="8" rx="1.8" fill="#3fb5c6"/><rect x="9.1" y="0.0" width="8" height="8" rx="1.8" fill="#f0a000"/><rect x="18.2" y="0.0" width="8" height="8" rx="1.8" fill="#3fb5c6"/><rect x="0.0" y="9.1" width="8" height="8" rx="1.8" fill="#f0a000"/><rect x="9.1" y="9.1" width="8" height="8" rx="1.8" fill="#b866e8"/><rect x="18.2" y="9.1" width="8" height="8" rx="1.8" fill="#f2d860"/><rect x="0.0" y="18.2" width="8" height="8" rx="1.8" fill="#b866e8"/><rect x="9.1" y="18.2" width="8" height="8" rx="1.8" fill="#3fb5c6"/><rect x="18.2" y="18.2" width="8" height="8" rx="1.8" fill="#f0a000"/></svg>
<svg style="position:absolute;left:578px;top:683px;" width="30" height="30" viewBox="0 0 30 30">
<defs>
<radialGradient id="ffo" cx="0.75" cy="0.2" r="1"><stop offset="0" stop-color="#ffe34a"/><stop offset="0.35" stop-color="#ffa22a"/><stop offset="0.7" stop-color="#ff4a3a"/><stop offset="1" stop-color="#f0207a"/></radialGradient>
<radialGradient id="ffp" cx="0.4" cy="0.3" r="0.8"><stop offset="0" stop-color="#9f50ff"/><stop offset="1" stop-color="#5a3ad8"/></radialGradient>
</defs>
<path d="M15 29.8 C6.8 29.8 0.4 23.6 0.4 16 C0.4 12 2 8.5 4.8 5.2 L6 9 L9 5.8 L10.4 8.4 C12 6.2 14.5 2.5 18.5 0.4 C19.8 3.5 22.5 5.6 24.5 8.5 L25.4 7.6 C27.8 10.3 29.1 13.6 29.1 17 C29.1 24.2 22.8 29.8 15 29.8 Z" fill="url(#ffo)"/>
<circle cx="14.6" cy="15.2" r="6.4" fill="url(#ffp)"/>
<path d="M4.2 10.8 C7.6 9.2 11.4 10.4 13.8 12.8 C11.2 12.6 9.4 14.6 9 17.2 C6.8 15.8 4.8 13.4 4.2 10.8 Z" fill="#ffa82e"/>
<path d="M10.5 8.4 C13.2 7 17.6 7.6 19.6 9.8 L17.6 10.4 C15.6 9.3 13 9 10.5 8.4 Z" fill="#b054f0"/></svg>
<svg style="position:absolute;left:622.7px;top:687.3px;" width="31" height="23" viewBox="0 0 31 23">
<path d="M0 2.2 Q0 0 2.2 0 H11.5 L14.5 2.8 H28.5 Q30.3 2.8 30.3 4.6 V8 H0 Z" fill="#1f8e9c"/>
<rect x="0" y="4.3" width="30.3" height="18.3" rx="2" fill="#39aebd"/></svg>
<svg style="position:absolute;left:670px;top:684px;" width="28" height="30" viewBox="0 0 28 30">
<rect x="0.3" y="1.4" width="26" height="26.5" rx="2" fill="#b9b9b9"/>
<rect x="2.4" y="3.9" width="21.6" height="4" fill="#50639a"/>
<rect x="2.4" y="10" width="21.6" height="1.3" fill="#50639a"/><rect x="2.4" y="12.9" width="21.6" height="1" fill="#50639a"/>
<rect x="2.4" y="15.1" width="7.8" height="1" fill="#50639a"/><rect x="2.4" y="17.3" width="5.8" height="1" fill="#50639a"/>
<path d="M7 29.5 L19.8 1" stroke="#3cc4d6" stroke-width="3.2" stroke-linecap="round"/></svg>
<svg style="position:absolute;left:713.8px;top:687.4px;" width="30" height="23" viewBox="0 0 30 23">
<rect x="0.6" y="0.6" width="28.6" height="21.4" rx="1.5" fill="#1a2f58" stroke="#9aa6b8" stroke-width="1"/>
<path d="M3.8 4.2 L7.8 7.4 L3.8 10.8" fill="none" stroke="#f5aa00" stroke-width="1.4" stroke-linecap="round"/>
<path d="M7.6 11 H12.5" stroke="#f5aa00" stroke-width="1.2" stroke-linecap="round"/></svg>
<svg style="position:absolute;left:760.5px;top:685px;" width="28" height="28" viewBox="0 0 28 28">
<rect x="7.6" y="0.4" width="11.8" height="7.6" rx="1" fill="#c45ef0"/>
<path d="M1.8 4.8 L12.8 3.8 L14.2 12 L2.5 12 Z" fill="#2fb0bd"/>
<rect x="12.8" y="7.4" width="12" height="5.4" rx="1" fill="#f2a600"/>
<path d="M1.2 11 H25.6 L26.8 19.8 L25.6 26.8 H1.6 L0.4 19.8 Z" fill="#9cb7df"/>
<path d="M8.6 14 H15.2 V20 H17.6 L11.9 25.4 L6.2 20 H8.6 Z" fill="#172f56"/></svg>
<svg style="position:absolute;left:806px;top:685.5px;" width="27" height="27" viewBox="0 0 27 27">
<rect x="0.2" y="0.2" width="26" height="26.2" rx="2.2" fill="#3db2c2"/>
<circle cx="13.2" cy="13" r="10.7" fill="#8fe6f0"/><circle cx="13.2" cy="13" r="9.1" fill="#c8a0f0"/><circle cx="13.2" cy="13" r="8.5" fill="#e2fbfd"/>
<rect x="6.6" y="9.6" width="13.2" height="6.6" rx="3.3" fill="#008995"/><circle cx="16.5" cy="12.9" r="2.4" fill="#fff"/></svg>
<div style="position:absolute;left:636.5px;top:715.2px;width:3px;height:3px;background:#d8d8d8;border-radius:1.5px;"></div>
<div style="position:absolute;left:727px;top:715.2px;width:3px;height:3px;background:#5fd3e2;border-radius:1.5px;"></div>
<div style="position:absolute;left:817.8px;top:715.2px;width:3px;height:3px;background:#d8d8d8;border-radius:1.5px;"></div>
<svg style="position:absolute;left:1172.5px;top:7.5px;" width="12" height="7" viewBox="0 0 12 7"><rect x="0" y="0" width="5.4" height="6.4" fill="#dedede"/><rect x="6.2" y="0" width="5.4" height="6.4" fill="#dedede"/><rect x="6.2" y="2.4" width="5.4" height="1.4" fill="#1b1b1b"/></svg>
<svg style="position:absolute;left:1195.5px;top:6.5px;" width="12" height="9" viewBox="0 0 12 9"><path d="M0.5 3 H2.8 L6 0.5 V8.3 L2.8 5.8 H0.5 Z" fill="#dedede"/><path d="M7.6 2.4 Q9 4.4 7.6 6.4 M9.4 1.2 Q11.4 4.4 9.4 7.6" stroke="#dedede" stroke-width="0.8" fill="none"/></svg>
<svg style="position:absolute;left:1219px;top:6.8px;" width="11" height="8" viewBox="0 0 11 8"><rect x="0.6" y="0.6" width="9.6" height="6.8" rx="0.8" fill="none" stroke="#dedede" stroke-width="1.2"/><rect x="0.6" y="0.6" width="9.6" height="2" fill="#dedede"/></svg>
<svg style="position:absolute;left:1240.5px;top:6.8px;" width="12" height="9" viewBox="0 0 12 9"><path d="M2.6 0.8 H10.6 Q11.6 0.8 11.6 1.8 V5.2 Q11.6 6.2 10.6 6.2 H7.6 L6 8.2 L5.6 6.2 H1.6 Q0.6 6.2 0.6 5.2 V1.8 Q0.6 0.8 1.6 0.8 Z" fill="#dedede"/><circle cx="3" cy="2.6" r="2.2" fill="#dedede" stroke="#1b1b1b" stroke-width="0.7"/></svg>
<svg style="position:absolute;left:1264.5px;top:6.8px;" width="10" height="9" viewBox="0 0 10 9"><path d="M2.6 2.2 A3.8 3.8 0 1 0 7.4 2.2" fill="none" stroke="#dedede" stroke-width="1.2"/><path d="M5 0.4 V4.4" stroke="#dedede" stroke-width="1.2"/></svg>
</body></html>
